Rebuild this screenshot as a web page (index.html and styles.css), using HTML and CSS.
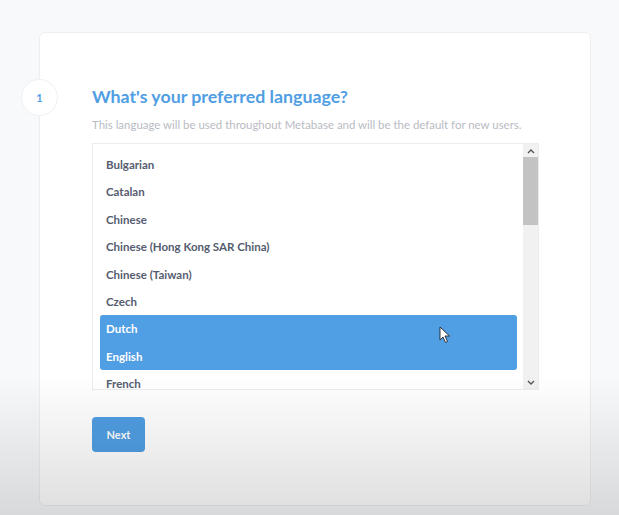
FILE: index.html
```html
<!DOCTYPE html>
<html>
<head>
<meta charset="utf-8">
<link rel="stylesheet" href="styles.css">
</head>
<body>
<div class="page">
  <div class="card">
    <div class="step">
      <div class="step-num">1</div>
      <h2 class="title">What's your preferred language?</h2>
      <p class="subtitle">This language will be used throughout Metabase and will be the default for new users.</p>
      <div class="listbox">
        <ul class="options">
          <li class="option">Bulgarian</li>
          <li class="option">Catalan</li>
          <li class="option">Chinese</li>
          <li class="option">Chinese (Hong Kong SAR China)</li>
          <li class="option">Chinese (Taiwan)</li>
          <li class="option">Czech</li>
          <li class="option selected first">Dutch</li>
          <li class="option selected last">English</li>
          <li class="option">French</li>
        </ul>
        <div class="scrollbar">
          <div class="arrow">
            <svg width="8" height="6" viewBox="0 0 8 6"><path d="M1 5 L4 2 L7 5" fill="none" stroke="#555" stroke-width="1.4"/></svg>
          </div>
          <div class="track"><div class="thumb"></div></div>
          <div class="arrow">
            <svg width="8" height="6" viewBox="0 0 8 6"><path d="M1 1 L4 4 L7 1" fill="none" stroke="#555" stroke-width="1.4"/></svg>
          </div>
        </div>
      </div>
      <button class="next">Next</button>
    </div>
  </div>
</div>
<svg class="cursor" width="12" height="18" viewBox="0 0 12 18"><path d="M1 1 L1 14 L4 11 L6.5 16.5 L8.5 15.5 L6 10 L10.5 10 Z" fill="#fff" stroke="#222" stroke-width="0.9" stroke-linejoin="round"/></svg>
<div class="fade"></div>
</body>
</html>
```

FILE: styles.css
```css
html, body {
  margin: 0;
  padding: 0;
}
body {
  width: 619px;
  height: 515px;
  overflow: hidden;
  background: #f8f9fa;
  font-family: Lato, "Open Sans", sans-serif;
  position: relative;
}
.page {
  padding: 32px 28px 0 39px;
}
.card {
  background: #fff;
  border: 1px solid #eceef0;
  border-radius: 6px;
  height: 474px;
  box-sizing: border-box;
  position: relative;
  padding: 52px 0 0 52px;
}
.step {
  position: relative;
}
.step-num {
  position: absolute;
  left: -71px;
  top: -6px;
  width: 35px;
  height: 35px;
  border-radius: 50%;
  background: #fff;
  border: 1px solid #eef0f2;
  color: #509ee3;
  font-size: 11px;
  font-weight: 700;
  display: flex;
  align-items: center;
  justify-content: center;
}
.title {
  margin: 0;
  font-size: 17.8px;
  line-height: 22px;
  font-weight: 700;
  color: #509ee3;
}
.subtitle {
  margin: 11px 0 0;
  font-size: 11.45px;
  line-height: 14px;
  color: #b8bbc3;
}
.listbox {
  margin-top: 11px;
  width: 447px;
  height: 247px;
  box-sizing: border-box;
  border: 1px solid #eaecee;
  display: flex;
  background: #fff;
}
.options {
  flex: 1;
  list-style: none;
  margin: 0;
  padding: 7px 6px 0 7px;
  overflow: hidden;
}
.option {
  height: 27.4px;
  line-height: 27px;
  padding-left: 6px;
  font-size: 11.5px;
  font-weight: 700;
  color: #555c70;
  border-radius: 3px;
}
.option.selected {
  background: #509ee3;
  color: #fff;
}
.option.first {
  border-radius: 3px 3px 0 0;
}
.option.last {
  border-radius: 0 0 3px 3px;
}
.scrollbar {
  width: 15px;
  background: #f1f1f1;
  display: flex;
  flex-direction: column;
}
.arrow {
  height: 13px;
  display: flex;
  align-items: center;
  justify-content: center;
}
.track {
  flex: 1;
}
.thumb {
  height: 68px;
  background: #c3c3c3;
}
.next {
  margin-top: 27px;
  width: 53px;
  height: 35px;
  border: none;
  border-radius: 4px;
  background: #509ee3;
  color: #fff;
  font-family: Lato, sans-serif;
  font-size: 11px;
  font-weight: 700;
  padding: 0;
}
.cursor {
  position: absolute;
  left: 439px;
  top: 326px;
}
.fade {
  position: absolute;
  left: 0;
  right: 0;
  top: 375px;
  bottom: 0;
  background: linear-gradient(to bottom, rgba(0,0,0,0), rgba(0,0,0,0.13));
  pointer-events: none;
}
```
